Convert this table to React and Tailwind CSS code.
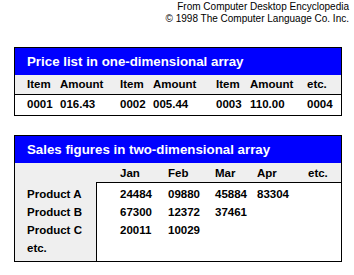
import React from 'react';

const FONT = { fontFamily: '"Liberation Sans", Arial, sans-serif' };

const priceCells = [
  ['Item', 'Amount', 'Item', 'Amount', 'Item', 'Amount', 'etc.'],
  ['0001', '016.43', '0002', '005.44', '0003', '110.00', '0004'],
];

const months = ['Jan', 'Feb', 'Mar', 'Apr', 'etc.'];

const sales = [
  ['Product A', '24484', '09880', '45884', '83304'],
  ['Product B', '67300', '12372', '37461', ''],
  ['Product C', '20011', '10029', '', ''],
  ['etc.', '', '', '', ''],
];

function TitleBar({ children }) {
  return (
    <div className="h-[27px] bg-[#0000ff] pl-3 flex items-center text-white font-bold text-[13.3px]">
      {children}
    </div>
  );
}

export default function App() {
  return (
    <div className="w-[354px] h-[275px] bg-white text-black" style={FONT}>
      {/* credits */}
      <div className="pt-[1px] pr-[5px] text-right text-[10px] leading-[12px]">
        <div>From Computer Desktop Encyclopedia</div>
        <div>© 1998 The Computer Language Co. Inc.</div>
      </div>

      {/* one-dimensional */}
      <div className="ml-[14px] mt-[22px] w-[328px] border border-black">
        <TitleBar>Price list in one-dimensional array</TitleBar>
        {priceCells.map((row, i) => (
          <div
            key={i}
            className={`grid grid-cols-[33px_60px_33px_63px_34px_57px_1fr] pl-3 items-center font-bold text-[11.5px] ${
              i === 0 ? 'h-[20px] bg-[#efefef] border-b border-black' : 'h-[20px] bg-white'
            }`}
          >
            {row.map((c, j) => (
              <span key={j}>{c}</span>
            ))}
          </div>
        ))}
      </div>

      {/* two-dimensional */}
      <div className="ml-[14px] mt-[19px] w-[328px] border border-black">
        <TitleBar>Sales figures in two-dimensional array</TitleBar>
        <div className="bg-[#efefef]">
          <div className="h-[19px] flex items-center pt-[2px] font-bold text-[11.5px]">
            <div className="w-[82px]" />
            <div className="grid grid-cols-[48px_47px_42px_51px_1fr] pl-[23px] flex-1">
              {months.map((m) => (
                <span key={m}>{m}</span>
              ))}
            </div>
          </div>
          <div className="flex font-bold text-[11.5px] leading-[18px]">
            <div className="w-[81px] pl-3 pt-[3px] pb-[4px]">
              {sales.map((r) => (
                <div key={r[0]}>{r[0]}</div>
              ))}
            </div>
            <div className="flex-1 bg-white border-l border-t border-black pt-[2px] pl-[23px]">
              {sales.map((r) => (
                <div key={r[0]} className="grid grid-cols-[48px_47px_42px_51px_1fr] h-[18px]">
                  {r.slice(1).map((v, j) => (
                    <span key={j}>{v}</span>
                  ))}
                </div>
              ))}
            </div>
          </div>
        </div>
      </div>
    </div>
  );
}
